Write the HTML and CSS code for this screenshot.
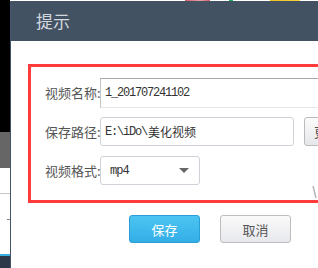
FILE: index.html
```html
<!DOCTYPE html>
<html lang="zh">
<head>
    <meta charset="UTF-8">
    <title>提示</title>
    <link rel="stylesheet" href="styles.css">
</head>
<body>
    <div class="page">
        <div class="side">
            <div class="side-black"></div>
            <div class="side-grey"></div>
            <div class="side-white">
                <div class="side-line"></div>
                <div class="side-tick"></div>
            </div>
            <div class="side-blue"></div>
            <div class="side-dark"></div>
        </div>

        <div class="main">
            <div class="bg-top"></div>
            <div class="dialog">
                <div class="dialog-head">提示</div>
                <div class="dialog-body">
                    <form class="export-form">
                        <div class="row">
                            <label>视频名称:</label>
                            <input type="text" class="field field-name" value="1_201707241102">
                        </div>
                        <div class="row">
                            <label>保存路径:</label>
                            <div class="field field-path">E:\iDo\<span class="cjk">美化视频</span></div>
                            <button type="button" class="btn-browse">更</button>
                        </div>
                        <div class="row">
                            <label>视频格式:</label>
                            <div class="select">
                                <span>mp4</span>
                                <span class="caret"></span>
                            </div>
                        </div>
                    </form>

                    <div class="actions">
                        <button type="button" class="btn btn-save">保存</button>
                        <button type="button" class="btn btn-cancel">取消</button>
                    </div>
                </div>
            </div>
        </div>

        <svg class="edge-mark" width="6" height="13" viewBox="0 0 6 13">
            <path d="M1 0 L4 12" stroke="#b8b8b8" stroke-width="1.6" fill="none"/>
        </svg>
    </div>
</body>
</html>
```

FILE: styles.css
```css
html, body {
    margin: 0;
    padding: 0;
    background: #ffffff;
}
body {
    font-family: "Noto Sans CJK SC", sans-serif;
    width: 318px;
    height: 268px;
    overflow: hidden;
}
.page {
    position: relative;
    display: flex;
    height: 268px;
}

/* strip of the window behind the dialog */
.side {
    width: 10px;
    display: flex;
    flex-direction: column;
    flex-shrink: 0;
}
.side-black {
    height: 132px;
    background: #000;
}
.side-grey {
    height: 36px;
    background: #666;
}
.side-white {
    height: 86px;
    background: #fff;
}
.side-line {
    height: 1px;
    margin-top: 25px;
    background: #c8c8c8;
}
.side-tick {
    height: 1px;
    width: 3px;
    margin: 25px 0 0 7px;
    background: #888;
}
.side-blue {
    height: 2px;
    background: #3ab0e2;
}
.side-dark {
    flex: 1;
    background: #2c3847;
}

.main {
    flex: 1;
    display: flex;
    flex-direction: column;
    min-width: 0;
}
.bg-top {
    height: 1px;
    background: linear-gradient(to right,
        #fff 0, #fff 175px,
        #d65a6a 175px, #e8a0a8 190px, #d65a6a 200px,
        #fff 200px, #fff 219px,
        #10b060 219px, #10b060 223px,
        #fff 223px, #fff 260px,
        #f0c020 260px, #f5d040 290px,
        #fff 290px);
}
.dialog {
    flex: 1;
    border-left: 1px solid #44546a;
    background: #fff;
}
.dialog-head {
    height: 40px;
    line-height: 40px;
    background: #435263;
    color: #d3d8de;
    font-size: 17px;
    padding-left: 25px;
}
.dialog-body {
    padding: 23px 0 0 17px;
}

/* highlighted area */
.export-form {
    width: 300px;
    border: 3px solid #ff3b3b;
    padding: 11px 0 15px 14px;
}
.row {
    display: flex;
    align-items: center;
    height: 29px;
    margin-bottom: 10px;
}
.row:last-child {
    margin-bottom: 0;
}
.row label {
    width: 55px;
    font-size: 13px;
    color: #555;
    white-space: nowrap;
}
.field {
    box-sizing: border-box;
    height: 29px;
    padding: 0 4px;
    font-family: "Liberation Mono", "Noto Sans CJK SC", monospace;
    font-size: 12px;
    letter-spacing: -1.2px;
    color: #333;
    background: #fff;
}
.field-name {
    width: 240px;
    height: 30px;
    border: 1px solid #e4e6ea;
    border-top-color: #a8a8a8;
    border-left-color: #c4c4c4;
    outline: none;
}
.field-path {
    display: flex;
    align-items: center;
    width: 194px;
    border: 1px solid #cfd3d9;
    border-radius: 3px;
}
.cjk {
    font-family: "Noto Sans CJK SC", sans-serif;
    font-size: 12px;
    letter-spacing: 0;
    margin-left: 1px;
}
.btn-browse {
    margin-left: 10px;
    height: 29px;
    width: 40px;
    flex-shrink: 0;
    padding: 0 0 0 9px;
    text-align: left;
    border: 1px solid #bbb;
    border-radius: 3px;
    background: linear-gradient(#fbfbfb, #e6e7ea);
    font-family: "Noto Sans CJK SC", sans-serif;
    font-size: 13px;
    color: #555;
}
.select {
    box-sizing: border-box;
    display: flex;
    align-items: center;
    justify-content: space-between;
    width: 100px;
    height: 29px;
    padding: 0 10px 0 9px;
    border: 1px solid #cfd3d9;
    border-radius: 3px;
    font-family: "Liberation Mono", monospace;
    font-size: 12px;
    letter-spacing: -1px;
    color: #333;
}
.caret {
    width: 0;
    height: 0;
    border-left: 5px solid transparent;
    border-right: 5px solid transparent;
    border-top: 5px solid #666;
}

.actions {
    display: flex;
    gap: 20px;
    margin: 12px 0 0 101px;
}
.btn {
    width: 71px;
    height: 28px;
    border-radius: 3px;
    font-family: "Noto Sans CJK SC", sans-serif;
    font-size: 13px;
    padding: 0;
}
.btn-save {
    border: 1px solid #2a9ed6;
    background: linear-gradient(#4cc4f2, #33aee6);
    color: #fff;
}
.btn-cancel {
    border: 1px solid #bdbdbd;
    background: linear-gradient(#fafafa, #e7e8ec);
    color: #555;
}

.edge-mark {
    position: absolute;
    left: 312px;
    top: 186px;
}
```
